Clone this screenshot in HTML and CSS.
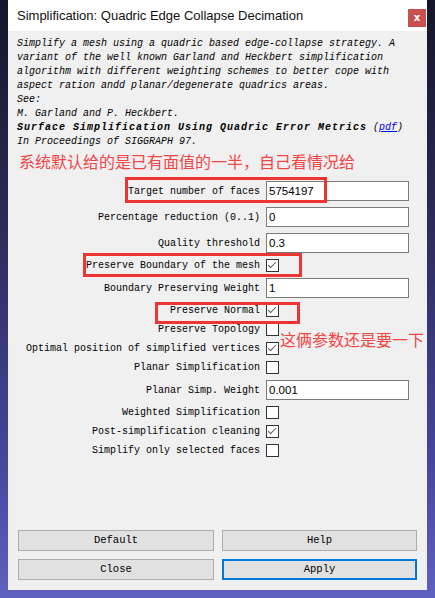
FILE: index.html
```html
<!DOCTYPE html>
<html>
<head>
<meta charset="utf-8">
<link rel="stylesheet" href="styles.css">
</head>
<body>
<div class="desk">
  <div class="window">
    <div class="titlebar">
      <span class="title">Simplification: Quadric Edge Collapse Decimation</span>
      <span class="close">x</span>
    </div>
    <div class="content">
      <div class="desc">
        <div class="line">Simplify a mesh using a quadric based edge-collapse strategy. A</div>
        <div class="line">variant of the well known Garland and Heckbert simplification</div>
        <div class="line">algorithm with different weighting schemes to better cope with</div>
        <div class="line">aspect ration andd planar/degenerate quadrics areas.</div>
        <div class="line">See:</div>
        <div class="line">M. Garland and P. Heckbert.</div>
        <div class="line ref"><b class="paper">Surface Simplification Using Quadric Error Metrics</b><span class="paren">(<a href="#">pdf</a>)</span></div>
        <div class="line">In Proceedings of SIGGRAPH 97.</div>
      </div>

      <div class="form">
        <label class="lbl">Target number of faces</label><div class="input">5754197</div>
        <label class="lbl">Percentage reduction (0..1)</label><div class="input">0</div>
        <label class="lbl">Quality threshold</label><div class="input">0.3</div>
        <label class="lbl">Preserve Boundary of the mesh</label><div class="cb checked"></div>
        <label class="lbl">Boundary Preserving Weight</label><div class="input">1</div>
        <label class="lbl">Preserve Normal</label><div class="cb checked"></div>
        <label class="lbl">Preserve Topology</label><div class="cb"></div>
        <label class="lbl">Optimal position of simplified vertices</label><div class="cb checked"></div>
        <label class="lbl">Planar Simplification</label><div class="cb"></div>
        <label class="lbl">Planar Simp. Weight</label><div class="input">0.001</div>
        <label class="lbl">Weighted Simplification</label><div class="cb"></div>
        <label class="lbl">Post-simplification cleaning</label><div class="cb checked"></div>
        <label class="lbl">Simplify only selected faces</label><div class="cb"></div>
      </div>

      <div class="buttons">
        <div class="btn">Default</div>
        <div class="btn">Help</div>
        <div class="btn">Close</div>
        <div class="btn primary">Apply</div>
      </div>
    </div>

    <div class="note note1">系统默认给的是已有面值的一半，自己看情况给</div>
    <div class="note note2">这俩参数还是要一下</div>
    <div class="mark mark1"></div>
    <div class="mark mark2"></div>
    <div class="mark mark3"></div>
  </div>
</div>
</body>
</html>
```

FILE: styles.css
```css
html, body {
  margin: 0;
  padding: 0;
}
body {
  width: 435px;
  height: 598px;
  overflow: hidden;
  background: linear-gradient(to bottom, #15152a 0%, #2a2a56 35%, #44449a 75%, #6060c0 100%);
}
.desk {
  padding: 0 8px 8px 8px;
}
.window {
  position: relative;
  width: 419px;
  height: 590px;
  background: #f0f0f0;
  display: flex;
  flex-direction: column;
}
.titlebar {
  height: 31px;
  background: #ffffff;
  display: flex;
  align-items: center;
  position: relative;
}
.title {
  margin-left: 9px;
  font-family: "Liberation Sans", Arial, sans-serif;
  font-size: 13px;
  color: #111;
}
.close {
  position: absolute;
  right: 1px;
  top: 9px;
  width: 18px;
  height: 18px;
  background: #c75050;
  color: #fff;
  font-family: "DejaVu Sans", sans-serif;
  font-weight: bold;
  font-size: 10px;
  line-height: 17px;
  text-align: center;
}
.content {
  flex: 1;
  display: flex;
  flex-direction: column;
  padding-bottom: 10px;
}
.desc {
  padding: 6px 0 0 9px;
  font-family: "Liberation Mono", monospace;
  font-style: italic;
  font-size: 10px;
  color: #000;
}
.line {
  height: 14px;
  line-height: 14px;
  white-space: nowrap;
}
.ref {
  display: flex;
  gap: 6px;
}
.paper {
  font-weight: bold;
  letter-spacing: 1px;
}
.desc a {
  color: #0000ee;
  text-decoration: underline;
}
.form {
  margin: 32px 18px 0 9px;
  display: grid;
  grid-template-columns: 1fr 143px;
  column-gap: 6px;
  row-gap: 6px;
  align-items: center;
}
.lbl {
  text-align: right;
  white-space: nowrap;
  font-family: "Liberation Mono", monospace;
  font-size: 10px;
  color: #000;
  line-height: 13px;
}
.input {
  box-sizing: border-box;
  height: 20px;
  background: #fff;
  border: 1px solid #7a7a7a;
  font-family: "Liberation Sans", Arial, sans-serif;
  font-size: 11.5px;
  line-height: 18px;
  padding-left: 2px;
  color: #000;
}
.cb {
  box-sizing: border-box;
  width: 13px;
  height: 13px;
  background: #fff;
  border: 1px solid #333;
  position: relative;
}
.cb.checked::after {
  content: "";
  position: absolute;
  left: 3px;
  top: 0px;
  width: 3px;
  height: 7px;
  border-right: 1px solid #555;
  border-bottom: 1px solid #555;
  transform: rotate(45deg);
}
.buttons {
  margin: auto 10px 0 10px;
  display: grid;
  grid-template-columns: 196px 195px;
  column-gap: 8px;
  row-gap: 8px;
}
.btn {
  box-sizing: border-box;
  height: 21px;
  background: #e1e1e1;
  border: 1px solid #adadad;
  font-family: "Liberation Mono", monospace;
  font-size: 10.5px;
  line-height: 19px;
  text-align: center;
  color: #000;
}
.btn.primary {
  border: 2px solid #0078d7;
  line-height: 17px;
}
.note {
  position: absolute;
  font-family: "Noto Sans CJK SC", sans-serif;
  font-size: 16px;
  line-height: 20px;
  color: #f04545;
  white-space: nowrap;
}
.note1 {
  left: 11px;
  top: 151px;
}
.note2 {
  left: 272px;
  top: 329px;
}
.mark {
  position: absolute;
  box-sizing: border-box;
  border: 3px solid #ef3434;
}
.mark1 {
  left: 117px;
  top: 177px;
  width: 202px;
  height: 26px;
}
.mark2 {
  left: 75px;
  top: 253px;
  width: 219px;
  height: 24px;
}
.mark3 {
  left: 147px;
  top: 302px;
  width: 145px;
  height: 22px;
}
```
